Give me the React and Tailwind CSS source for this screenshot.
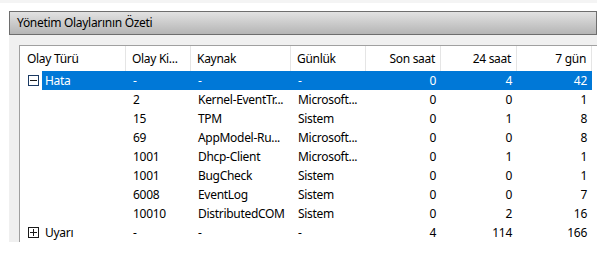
import React from 'react';

const cols = [
  { w: 'w-[65px]', align: 'left' },
  { w: 'w-[100px]', align: 'left' },
  { w: 'w-[75px]', align: 'left' },
  { w: 'w-[75px]', align: 'right' },
  { w: 'w-[76px]', align: 'right' },
  { w: 'w-[75px]', align: 'right' },
];

const headers = ['Olay Ki...', 'Kaynak', 'Günlük', 'Son saat', '24 saat', '7 gün'];

const children = [
  ['2', 'Kernel-EventTr...', 'Microsoft...', '0', '0', '1'],
  ['15', 'TPM', 'Sistem', '0', '1', '8'],
  ['69', 'AppModel-Ru...', 'Microsoft...', '0', '0', '8'],
  ['1001', 'Dhcp-Client', 'Microsoft...', '0', '1', '1'],
  ['1001', 'BugCheck', 'Sistem', '0', '0', '1'],
  ['6008', 'EventLog', 'Sistem', '0', '0', '7'],
  ['10010', 'DistributedCOM', 'Sistem', '0', '2', '16'],
];

const Cells = ({ values }) =>
  values.map((v, i) => (
    <div
      key={i}
      className={
        cols[i].w +
        ' shrink-0 whitespace-nowrap ' +
        (cols[i].align === 'right' ? 'text-right pr-[5px]' : 'pl-[7px]')
      }
    >
      {v}
    </div>
  ));

const Expander = ({ open, selected }) => (
  <div
    className={
      'relative w-[11px] h-[11px] border ' +
      (selected ? 'border-[#1b3a63]' : 'border-[#1a1a1a]')
    }
  >
    <div className="absolute left-[1px] right-[1px] top-[4px] h-px bg-[#1a1a1a]" />
    {!open && <div className="absolute top-[1px] bottom-[1px] left-[4px] w-px bg-[#1a1a1a]" />}
  </div>
);

const GroupRow = ({ label, values, open, selected }) => (
  <div className="flex h-[19px] items-center">
    <div className="w-[22px] shrink-0 flex items-center pl-[8px]">
      <Expander open={open} selected={selected} />
    </div>
    <div
      className={
        'flex h-full items-center ' + (selected ? 'bg-[#0078d7] text-white' : '')
      }
    >
      <div className="w-[84px] shrink-0 pl-[3px]">{label}</div>
      <Cells values={values} />
    </div>
  </div>
);

export default function App() {
  return (
    <div
      className="w-[608px] h-[256px] bg-white text-[12px] tracking-[-0.3px] text-black overflow-hidden"
      style={{ fontFamily: '"Segoe UI", "Noto Sans", sans-serif' }}
    >
      <div className="h-[3px] w-[597px] bg-[#f4f4f4]" />
      <div className="pl-[9px] pt-[8px] w-[597px]">
        <div className="h-[24px] border border-[#6e6e6e] bg-gradient-to-b from-[#e2e2e2] to-[#b5b5b5] flex items-center pl-[7px]">
          Yönetim Olaylarının Özeti
        </div>
        <div className="bg-[#f0f0f0] pt-[10px] pl-[10px]">
          <div className="bg-white border-l border-t border-[#a0a0a0] h-[197px]">
            <div className="flex h-[25px] items-center">
              <div className="w-[106px] shrink-0 border-r border-[#e5e5e5] h-full flex items-center pl-[7px]">
                Olay Türü
              </div>
              {headers.map((h, i) => (
                <div
                  key={h}
                  className={
                    cols[i].w +
                    ' shrink-0 h-full flex items-center border-r border-[#e5e5e5] overflow-hidden whitespace-nowrap ' +
                    (cols[i].align === 'right' ? 'justify-end pr-[5px]' : 'pl-[6px]')
                  }
                >
                  {h}
                </div>
              ))}
            </div>
            <GroupRow label="Hata" values={['-', '-', '-', '0', '4', '42']} open selected />
            {children.map((r, i) => (
              <div key={i} className="flex h-[19px] items-center">
                <div className="w-[106px] shrink-0" />
                <Cells values={r} />
              </div>
            ))}
            <GroupRow label="Uyarı" values={['-', '-', '-', '4', '114', '166']} />
          </div>
        </div>
      </div>
    </div>
  );
}
